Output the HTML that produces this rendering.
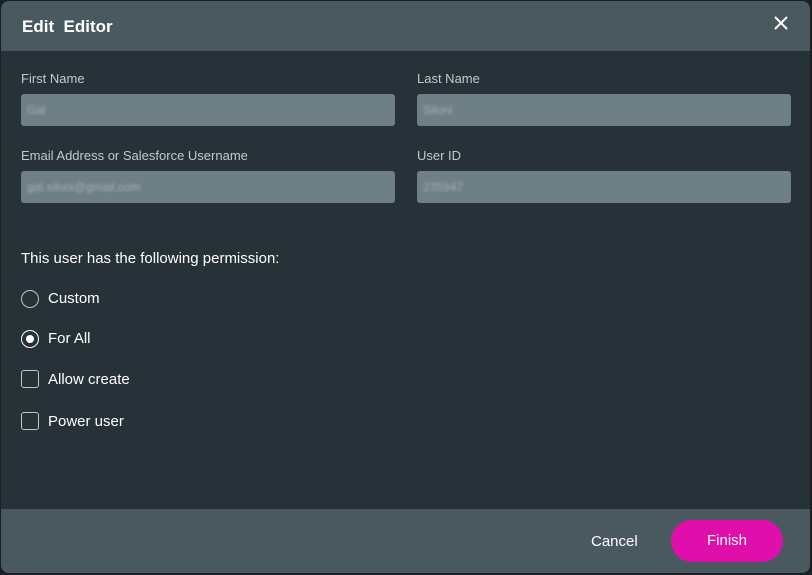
<!DOCTYPE html>
<html><head><style>
*{margin:0;padding:0;box-sizing:border-box}
body{width:812px;height:575px;background:#1a1f23;font-family:"Liberation Sans",sans-serif;position:relative;overflow:hidden}
.d{position:absolute;left:1px;top:1px;width:809px;height:572px;background:#263138;border-radius:8px;overflow:hidden}
.h{position:absolute;left:0;top:0;width:100%;height:50px;background:#4a5960}
.h span{position:absolute;left:21px;top:16px;color:#fff;font-weight:bold;font-size:17px}
.x{position:absolute;left:772px;top:14px}
.l{position:absolute;color:#c3cacd;font-size:13px}
.i{position:absolute;height:32px;width:374px;background:#6f7f86;border-radius:3px;color:#a3b0b5;font-size:12px;padding:9px 6px}
.i b{font-weight:normal;filter:blur(1.2px)}
.t{position:absolute;color:#fff;font-size:15px}
.r{position:absolute;left:20px;width:18px;height:18px;border:1.5px solid #bfc6ca;border-radius:50%}
.c{position:absolute;left:20px;width:18px;height:18px;border:1.5px solid #bfc6ca;border-radius:3px}
.f{position:absolute;left:0;top:508px;width:100%;height:64px;background:#4a5960}
.btn{position:absolute;left:670px;top:11px;width:112px;height:42px;background:#e00fac;border-radius:21px;color:#fff;font-size:15px;text-align:center;line-height:42px}
</style></head><body>
<div class="d">
<div class="h"><span>Edit&nbsp; Editor</span>
<svg class="x" width="16" height="16" viewBox="0 0 16 16"><path d="M2 2L14 14M14 2L2 14" stroke="#fff" stroke-width="2"/></svg></div>
<div class="l" style="left:20px;top:70px">First Name</div>
<div class="l" style="left:416px;top:70px">Last Name</div>
<div class="i" style="left:20px;top:93px"><b>Gal</b></div>
<div class="i" style="left:416px;top:93px"><b>Siloni</b></div>
<div class="l" style="left:20px;top:147px">Email Address or Salesforce Username</div>
<div class="l" style="left:416px;top:147px">User ID</div>
<div class="i" style="left:20px;top:170px"><b>gal.siloni@gmail.com</b></div>
<div class="i" style="left:416px;top:170px"><b>235947</b></div>
<div class="t" style="left:20px;top:249px">This user has the following permission:</div>
<div class="r" style="top:289px"></div><div class="t" style="left:47px;top:289px">Custom</div>
<div class="r" style="top:329px;border-color:#fff"><div style="position:absolute;left:3.5px;top:3.5px;width:8px;height:8px;border-radius:50%;background:#fff"></div></div><div class="t" style="left:47px;top:329px">For All</div>
<div class="c" style="top:369px"></div><div class="t" style="left:47px;top:370px">Allow create</div>
<div class="c" style="top:411px"></div><div class="t" style="left:47px;top:412px">Power user</div>
<div class="f"><div class="t" style="left:590px;top:24px">Cancel</div><div class="btn">Finish</div></div>
</div>
</body></html>
